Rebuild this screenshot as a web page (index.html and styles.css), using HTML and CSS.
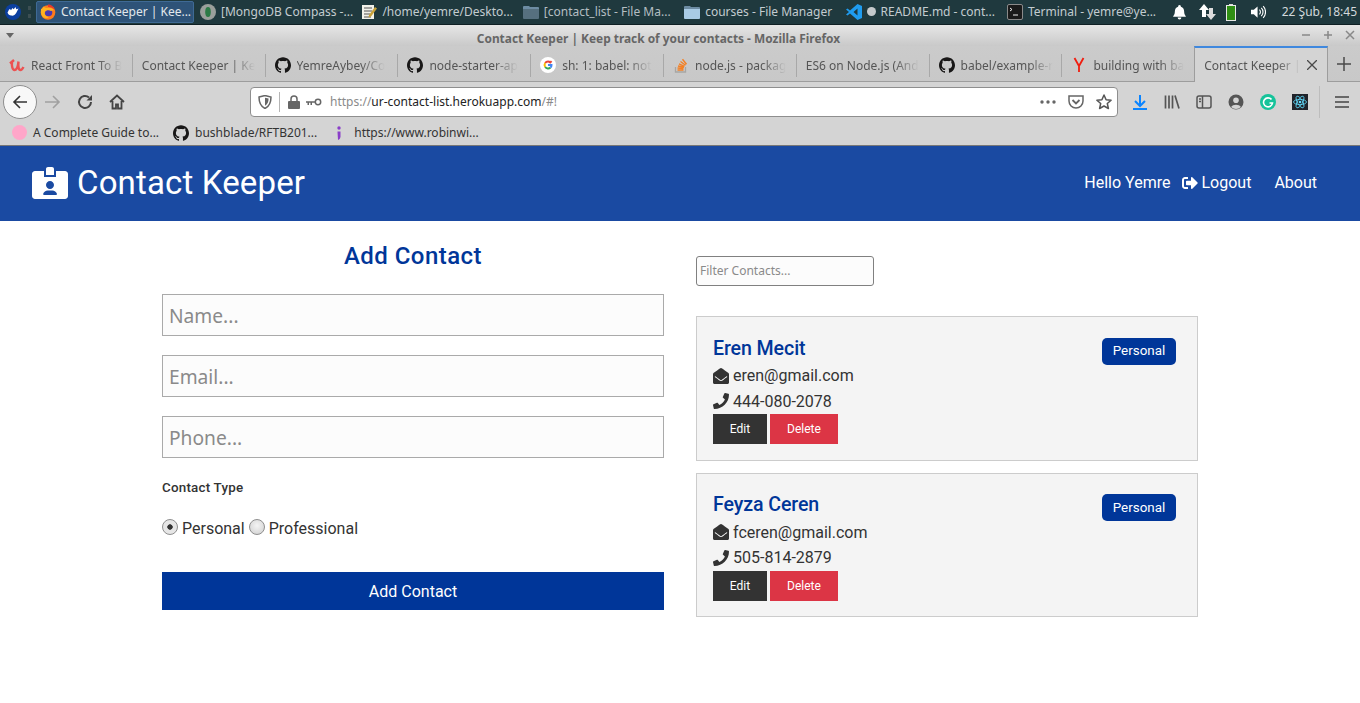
FILE: index.html
```html
<!DOCTYPE html>
<html lang="en">
<head>
<meta charset="utf-8">
<title>Contact Keeper</title>
<link rel="stylesheet" href="styles.css">
</head>
<body>
<svg class="sprite" aria-hidden="true">
  <symbol id="gh" viewBox="0 0 24 24"><path d="M12 .297c-6.63 0-12 5.373-12 12 0 5.303 3.438 9.8 8.205 11.385.6.113.82-.258.82-.577 0-.285-.01-1.04-.015-2.04-3.338.724-4.042-1.61-4.042-1.61C4.422 18.07 3.633 17.7 3.633 17.7c-1.087-.744.084-.729.084-.729 1.205.084 1.838 1.236 1.838 1.236 1.07 1.835 2.809 1.305 3.495.998.108-.776.417-1.305.76-1.605-2.665-.3-5.466-1.332-5.466-5.93 0-1.31.465-2.38 1.235-3.22-.135-.303-.54-1.523.105-3.176 0 0 1.005-.322 3.3 1.23.96-.267 1.98-.399 3-.405 1.02.006 2.04.138 3 .405 2.28-1.552 3.285-1.23 3.285-1.23.645 1.653.24 2.873.12 3.176.765.84 1.23 1.91 1.23 3.22 0 4.61-2.805 5.625-5.475 5.92.42.36.81 1.096.81 2.22 0 1.606-.015 2.896-.015 3.286 0 .315.21.69.825.57C20.565 22.092 24 17.592 24 12.297c0-6.627-5.373-12-12-12"/></symbol>
  <symbol id="mail" viewBox="0 0 512 512"><path d="M512 464c0 26.51-21.49 48-48 48H48c-26.51 0-48-21.49-48-48V200.724a48 48 0 0 1 18.387-37.776c24.913-19.529 45.501-35.365 164.2-121.511C199.412 29.17 232.797-.347 256 .003c23.198-.354 56.596 29.172 73.413 41.433 118.687 86.137 139.303 101.995 164.2 121.512A48 48 0 0 1 512 200.724V464zm-65.666-196.605c-2.563-3.728-7.7-4.595-11.339-1.907-22.845 16.873-55.462 40.705-105.582 77.079-16.825 12.266-50.21 41.781-73.413 41.43-23.211.344-56.559-29.143-73.413-41.43-50.114-36.37-82.734-60.204-105.582-77.079-3.639-2.688-8.776-1.821-11.339 1.907l-9.072 13.196a7.998 7.998 0 0 0 1.839 10.967c22.887 16.899 55.454 40.69 105.303 76.868 20.274 14.781 56.524 47.813 92.264 47.573 35.724.242 71.961-32.771 92.263-47.573 49.85-36.179 82.418-59.97 105.303-76.868a7.998 7.998 0 0 0 1.839-10.967l-9.071-13.196z"/></symbol>
  <symbol id="phone" viewBox="0 0 512 512"><path d="M493.4 24.6l-104-24c-11.3-2.6-22.9 3.3-27.5 13.9l-48 112c-4.2 9.8-1.4 21.3 6.9 28l60.6 49.6c-36 76.7-98.9 140.5-177.2 177.2l-49.6-60.6c-6.8-8.3-18.2-11.1-28-6.9l-112 48C3.9 366.5-2 378.1.6 389.4l24 104C27.1 504.2 36.7 512 48 512c256.1 0 464-207.5 464-464 0-11.2-7.7-20.9-18.6-23.4z"/></symbol>
  <symbol id="folder" viewBox="0 0 16 14"><path d="M0 2a1 1 0 0 1 1-1h5l1 1h8a1 1 0 0 1 1 1v1H0z" fill="#6d8ca3"/><path d="M0 4h16v9a1 1 0 0 1-1 1H1a1 1 0 0 1-1-1z" fill="currentColor"/></symbol>
</svg>

<div class="taskbar">
  <div class="start">
    <svg class="start-logo" viewBox="0 0 16 16"><circle cx="8" cy="8" r="8" fill="#0b3fa0"/><path d="M2.500 8.500C3.500 7.500 3.500 5 5 5l1 1.200L7.500 4l1.200 1.300L10.500 3l.8 2.200 2.200-.7-2.300 4.500c-1 2-3.200 3-5 2.500-1.700 0-3.200-1.200-3.700-3z" fill="#fff"/></svg>
    <span class="grip"></span>
  </div>
  <div class="task task-active">
    <svg class="ticon" viewBox="0 0 16 16"><circle cx="8" cy="8.500" r="7.300" fill="#ff7a1a"/><circle cx="8.500" cy="8.500" r="3.800" fill="#4a3ab0"/><path d="M1 5c1 0 2-1 3-3 0 1 1 2 3 2 3-.500 5 0 7 2l-3 1C9 5.500 6 6 5 8c-1 2 1 5 4 5-3 3-8 0-8-5z" fill="#ffb320"/><path d="M8 .600c3 0 6 2 7 5.400-2-2-4-3-7-3z" fill="#e8392c"/></svg>
    <span class="tlabel">Contact Keeper | Kee...</span>
  </div>
  <div class="task">
    <svg class="ticon" viewBox="0 0 16 16"><circle cx="8" cy="8" r="8" fill="#9a9f9b"/><ellipse cx="8" cy="8" rx="2.800" ry="5" fill="#2c7a46"/></svg>
    <span class="tlabel">[MongoDB Compass -...</span>
  </div>
  <div class="task">
    <svg class="ticon" viewBox="0 0 16 16"><path d="M1 1h12v14H1z" fill="#f2f2ea"/><path d="M3 4h8M3 7h8M3 10h6M3 13h7" stroke="#555" stroke-width="1"/><path d="M8 11l6-8 2 1.500-6 8-2.500 1z" fill="#c7a23a"/></svg>
    <span class="tlabel">/home/yemre/Deskto...</span>
  </div>
  <div class="task task-dim">
    <svg class="ticon folder-dim"><use href="#folder"/></svg>
    <span class="tlabel">[contact_list - File Ma...</span>
  </div>
  <div class="task">
    <svg class="ticon folder-light"><use href="#folder"/></svg>
    <span class="tlabel">courses - File Manager</span>
  </div>
  <div class="task">
    <svg class="ticon" viewBox="0 0 16 16"><path d="M11.500 0L16 2v12l-4.500 2L4 9.500 1.500 11.500 0 10.500 3 8 0 5.500l1.500-1L4 6.500zM11.500 4.500L7.500 8l4 3.500z" fill="#1f9cf0"/></svg>
    <span class="tlabel tlabel-code"><span class="dot-mod"></span>README.md - cont...</span>
  </div>
  <div class="task">
    <svg class="ticon" viewBox="0 0 16 16"><rect x=".5" y=".5" width="15" height="15" rx="1.500" fill="#1a1a1a" stroke="#8a8a8a"/><path d="M3 7l2-1.500L3 4M6 11h5" stroke="#eee" fill="none"/></svg>
    <span class="tlabel">Terminal - yemre@ye...</span>
  </div>
  <div class="tray">
    <svg class="tray-bell" viewBox="0 0 14 16"><path d="M7 0a1.500 1.500 0 0 1 1.500 1.700C11 2.500 12 4.500 12 7c0 3 1 4 2 5.500H0C1 11 2 10 2 7c0-2.500 1-4.500 3.500-5.300A1.500 1.500 0 0 1 7 0zM5 13.500h4a2 2 0 0 1-4 0z" fill="#fff"/></svg>
    <svg class="tray-net" viewBox="0 0 18 18"><path d="M5 1l5 6H7v7H3V7H0z" fill="#fff"/><path d="M12 17l-5-6h3V5h4v6h3z" fill="#ddd"/></svg>
    <svg class="tray-bat" viewBox="0 0 10 17"><rect x="3" y="0" width="4" height="2" fill="#ddd"/><rect x=".5" y="1.500" width="9" height="15" fill="#2f8f14" stroke="#e8e8e8"/></svg>
    <svg class="tray-vol" viewBox="0 0 16 14"><path d="M0 4.500h3L7 1v12L3 9.500H0z" fill="#fff"/><path d="M9 4.500a3.500 3.500 0 0 1 0 5M11 2.500a6.500 6.500 0 0 1 0 9M13 .8a9 9 0 0 1 0 12.400" stroke="#fff" stroke-width="1.200" fill="none"/></svg>
    <span class="clock tlabel">22 Şub, 18:45</span>
  </div>
</div>

<div class="window-title">
  <svg class="wmenu" viewBox="0 0 8 5"><path d="M0 0h8L4 5z" fill="#666"/></svg>
  <span class="wtitle">Contact Keeper | Keep track of your contacts - Mozilla Firefox</span>
  <div class="wbtns">
    <svg viewBox="0 0 10 10"><path d="M1 5h8" stroke="#888" stroke-width="1.500"/></svg>
    <svg viewBox="0 0 10 10"><path d="M1 5h8M5 1v8" stroke="#888" stroke-width="1.500"/></svg>
    <svg viewBox="0 0 10 10"><path d="M1 1l8 8M9 1l-8 8" stroke="#888" stroke-width="1.500"/></svg>
  </div>
</div>

<div class="tabbar">
  <div class="tab">
    <svg class="fav" viewBox="0 0 16 16"><path d="M1 6.500l4-3.500M3 5c-.500 4 .500 8 2.500 8S9 9 9.500 4.500C9 9 9.500 13 11.500 13c1 0 2-1 3-3" stroke="#ec5252" stroke-width="2.400" fill="none"/></svg>
    <span class="tab-text">React Front To B</span>
  </div>
  <div class="tab"><span class="tab-text">Contact Keeper | Ke</span></div>
  <div class="tab"><svg class="fav"><use href="#gh"/></svg><span class="tab-text">YemreAybey/Co</span></div>
  <div class="tab"><svg class="fav"><use href="#gh"/></svg><span class="tab-text">node-starter-ap</span></div>
  <div class="tab">
    <svg class="fav" viewBox="0 0 16 16"><circle cx="8" cy="8" r="8" fill="#fff"/><path d="M8 4.500a3.500 3.500 0 0 1 2.300.9l1.300-1.300" stroke="#ea4335" stroke-width="2" fill="none"/><path d="M5.200 6a3.500 3.500 0 0 1 2.800-1.500" stroke="#ea4335" stroke-width="2" fill="none"/><path d="M5.200 6a3.500 3.500 0 0 0 0 4" stroke="#fbbc05" stroke-width="2" fill="none"/><path d="M5.200 10a3.500 3.500 0 0 0 5.300.6" stroke="#34a853" stroke-width="2" fill="none"/><path d="M10.500 10.600A3.500 3.500 0 0 0 11.500 8H8" stroke="#4285f4" stroke-width="2" fill="none"/></svg>
    <span class="tab-text">sh: 1: babel: not</span>
  </div>
  <div class="tab">
    <svg class="fav" viewBox="0 0 16 16"><path d="M2.500 10v5h10v-5" stroke="#a8a6a3" stroke-width="1.300" fill="none"/><path d="M4.500 13h6M4.500 11l6 .5M5 9l6 1.200M6 6.800l5.500 2.600M7.500 4.500l5 3.800M9.500 2.300l4 5" stroke="#f48024" stroke-width="1.400" fill="none"/></svg>
    <span class="tab-text">node.js - packag</span>
  </div>
  <div class="tab"><span class="tab-text">ES6 on Node.js (And</span></div>
  <div class="tab"><svg class="fav"><use href="#gh"/></svg><span class="tab-text">babel/example-r</span></div>
  <div class="tab">
    <svg class="fav" viewBox="0 0 16 16"><path d="M3.500 1L8 9v6M12.500 1L8 9" stroke="#f01d0f" stroke-width="1.800" fill="none"/></svg>
    <span class="tab-text">building with ba</span>
  </div>
  <div class="tab tab-active">
    <span class="tab-text">Contact Keeper |</span>
    <svg class="tab-x" viewBox="0 0 10 10"><path d="M0 0l10 10M10 0L0 10" stroke="#4a4a4a" stroke-width="1.300"/></svg>
  </div>
  <svg class="tab-new" viewBox="0 0 14 14"><path d="M7 0v14M0 7h14" stroke="#4a4a4a" stroke-width="1.500"/></svg>
</div>

<div class="navbar">
  <div class="back"><svg viewBox="0 0 16 16"><path d="M15 8H2M8 2L2 8l6 6" stroke="#333" stroke-width="1.600" fill="none"/></svg></div>
  <svg class="nav-ic nav-fwd" viewBox="0 0 16 16"><path d="M0 8h14M8 2l6 6-6 6" stroke="#a0a0a0" stroke-width="1.600" fill="none"/></svg>
  <svg class="nav-ic nav-reload" viewBox="0 0 16 16"><path d="M14 8a6 6 0 1 1-2-4.500" stroke="#444" stroke-width="2" fill="none"/><path d="M15 1v5.500H9.500z" fill="#444"/></svg>
  <svg class="nav-ic nav-home" viewBox="0 0 16 16"><path d="M1 8l7-6.500L15 8M3.500 7v7.500h3.500v-4h2v4h3.500V7" stroke="#444" stroke-width="1.800" fill="none"/></svg>
  <div class="urlbar">
    <svg class="ub-shield" viewBox="0 0 14 14"><path d="M1 2l6-1.500L13 2c0 5-1 9-6 11.500C2 11 1 7 1 2z" stroke="#666" stroke-width="1.500" fill="none"/><path d="M7 2.800l3.500.8c0 3-.5 5.500-3.500 7.200z" fill="#666"/></svg>
    <span class="ub-sep"></span>
    <svg class="ub-lock" viewBox="0 0 12 14"><path d="M3 6V4a3 3 0 0 1 6 0v2" stroke="#666" stroke-width="1.500" fill="none"/><rect y="6" width="12" height="8" rx="1" fill="#666"/></svg>
    <svg class="ub-key" viewBox="0 0 16 8"><circle cx="12" cy="4" r="2.700" stroke="#666" stroke-width="1.500" fill="none"/><path d="M9 3.300H0v1.500h1.500V7H3V4.800h1.500V7H6V4.800h3z" fill="#666"/></svg>
    <span class="url"><span class="url-dim">https://</span>ur-contact-list.herokuapp.com<span class="url-dim">/#!</span></span>
    <svg class="ub-dots" viewBox="0 0 16 4"><circle cx="2" cy="2" r="1.700"/><circle cx="8" cy="2" r="1.700"/><circle cx="14" cy="2" r="1.700"/></svg>
    <svg class="ub-pocket" viewBox="0 0 16 14"><path d="M1 1h14v5a7 7 0 0 1-14 0z" stroke="#666" stroke-width="1.500" fill="none"/><path d="M4.500 5L8 8.500 11.500 5" stroke="#666" stroke-width="1.800" fill="none"/></svg>
    <svg class="ub-star" viewBox="0 0 16 16"><path d="M8 1l2.100 4.700 5 .5-3.800 3.300 1.100 5L8 12l-4.400 2.500 1.100-5L.9 6.200l5-.5z" stroke="#555" stroke-width="1.500" fill="none" stroke-linejoin="round"/></svg>
  </div>
  <svg class="tool tool-dl" viewBox="0 0 16 16"><path d="M8 1v10M3 7l5 5 5-5" stroke="#0a84ff" stroke-width="2" fill="none"/><path d="M1 15h14" stroke="#0a84ff" stroke-width="2"/></svg>
  <svg class="tool" viewBox="0 0 16 16"><path d="M1.500 1.500v13M5 1.500v13M8.500 1.500v13M11 1.500l4 13" stroke="#555" stroke-width="1.700" fill="none"/></svg>
  <svg class="tool" viewBox="0 0 16 16"><rect x="1" y="2" width="14" height="12" rx="2" stroke="#555" stroke-width="1.500" fill="none"/><path d="M6.500 2v12M3 5h2M3 7.500h2" stroke="#555" stroke-width="1.500"/></svg>
  <svg class="tool" viewBox="0 0 16 16"><circle cx="8" cy="8" r="7.500" fill="#555"/><circle cx="8" cy="6.300" r="2.800" fill="#d4d4d4"/><path d="M3 13a5.500 4 0 0 1 10 0 7 7 0 0 1-10 0z" fill="#d4d4d4"/></svg>
  <svg class="tool" viewBox="0 0 16 16"><circle cx="8" cy="8" r="8" fill="#15c39a"/><path d="M11.500 5.500A4.500 4.500 0 1 0 12.500 9H9.500" stroke="#fff" stroke-width="1.600" fill="none"/></svg>
  <svg class="tool" viewBox="0 0 16 16"><rect width="16" height="16" fill="#20232a"/><g stroke="#61dafb" stroke-width=".8" fill="none"><ellipse cx="8" cy="8" rx="6.500" ry="2.600"/><ellipse cx="8" cy="8" rx="6.500" ry="2.600" transform="rotate(60 8 8)"/><ellipse cx="8" cy="8" rx="6.500" ry="2.600" transform="rotate(120 8 8)"/></g><circle cx="8" cy="8" r="1.300" fill="#61dafb"/></svg>
  <span class="tool-sep"></span>
  <svg class="tool-menu" viewBox="0 0 14 12"><path d="M0 1h14M0 6h14M0 11h14" stroke="#444" stroke-width="1.700"/></svg>
</div>

<div class="bookmarks">
  <div class="bm"><span class="bm-dot"></span>A Complete Guide to...</div>
  <div class="bm"><svg class="fav"><use href="#gh"/></svg>bushblade/RFTB201...</div>
  <div class="bm"><svg class="bm-semi" viewBox="0 0 6 14"><circle cx="3" cy="2" r="1.700" fill="#8a3ec9"/><path d="M1.500 5.500h3v5c0 1.500-1 3-2.500 3.500z" fill="#8a3ec9"/></svg>https://www.robinwi...</div>
</div>

<header class="app-nav">
  <h1 class="brand">
    <svg class="brand-icon" viewBox="0 0 576 512"><path d="M528 64H384v96H192V64H48C21.500 64 0 85.500 0 112v352c0 26.500 21.500 48 48 48h480c26.500 0 48-21.500 48-48V112c0-26.500-21.500-48-48-48zM288 224c35.300 0 64 28.700 64 64s-28.700 64-64 64-64-28.700-64-64 28.700-64 64-64zm93.300 224H194.700c-10.400 0-18.800-10-15.600-19.800 10-30.600 39-52.200 72.900-52.200h74c33.900 0 62.900 21.600 72.900 52.200 3.200 9.800-5.200 19.800-15.600 19.800zM352 32c0-17.700-14.300-32-32-32h-64c-17.700 0-32 14.300-32 32v96h128V32z"/></svg>
    Contact Keeper
  </h1>
  <nav class="app-links">
    <span>Hello Yemre</span>
    <a class="logout" href="#"><svg class="logout-ic" viewBox="0 0 512 512"><path d="M497 273L329 441c-15 15-41 4.500-41-17v-96H152c-13.300 0-24-10.700-24-24v-96c0-13.300 10.700-24 24-24h136V88c0-21.400 25.900-32 41-17l168 168c9.300 9.400 9.300 24.600 0 34zM192 436v-40c0-6.600-5.400-12-12-12H96c-17.700 0-32-14.300-32-32V160c0-17.700 14.300-32 32-32h84c6.600 0 12-5.400 12-12V76c0-6.600-5.400-12-12-12H96c-53 0-96 43-96 96v192c0 53 43 96 96 96h84c6.600 0 12-5.400 12-12z"/></svg>Logout</a>
    <a class="about" href="#">About</a>
  </nav>
</header>

<main class="container">
  <form class="contact-form">
    <h2 class="form-title">Add Contact</h2>
    <input class="field" type="text" placeholder="Name...">
    <input class="field" type="text" placeholder="Email...">
    <input class="field" type="text" placeholder="Phone...">
    <h5 class="type-label">Contact Type</h5>
    <div class="radios">
      <span class="radio radio-on"></span><span class="radio-text">Personal</span>
      <span class="radio"></span><span class="radio-text">Professional</span>
    </div>
    <button class="submit" type="button">Add Contact</button>
  </form>
  <section class="contacts">
    <input class="filter" type="text" placeholder="Filter Contacts...">
    <article class="card">
      <div class="card-head">
        <h3 class="card-name">Eren Mecit</h3>
        <span class="badge">Personal</span>
      </div>
      <p class="card-line"><svg class="line-ic"><use href="#mail"/></svg>eren@gmail.com</p>
      <p class="card-line"><svg class="line-ic"><use href="#phone"/></svg>444-080-2078</p>
      <div class="card-btns"><button class="btn btn-dark" type="button">Edit</button><button class="btn btn-red" type="button">Delete</button></div>
    </article>
    <article class="card">
      <div class="card-head">
        <h3 class="card-name">Feyza Ceren</h3>
        <span class="badge">Personal</span>
      </div>
      <p class="card-line"><svg class="line-ic"><use href="#mail"/></svg>fceren@gmail.com</p>
      <p class="card-line"><svg class="line-ic"><use href="#phone"/></svg>505-814-2879</p>
      <div class="card-btns"><button class="btn btn-dark" type="button">Edit</button><button class="btn btn-red" type="button">Delete</button></div>
    </article>
  </section>
</main>
</body>
</html>
```

FILE: styles.css
```css
* { box-sizing: border-box; }
html, body { margin: 0; height: 100%; overflow: hidden; }
body { background: #fff; font-family: "Roboto", sans-serif; color: #333; }
.sprite { display: none; }

/* desktop panel */
.taskbar { height: 25px; background: #1f393e; display: flex; align-items: center; font: 12px/25px "Noto Sans", sans-serif; color: #c3ccd0; border-bottom: 1px solid #0f2024; }
.start { width: 36px; flex: none; display: flex; align-items: center; padding-left: 5px; }
.start-logo { width: 16px; height: 16px; }
.grip { width: 4px; height: 12px; margin-left: 7px; border-left: 3px dotted #3c4f53; }
.task { width: 161.4px; flex: none; height: 25px; display: flex; align-items: center; padding-left: 3px; gap: 5px; white-space: nowrap; overflow: hidden; }
.tlabel { position: relative; top: -1px; }
.task-active { width: 158px; height: 22px; padding-left: 3px; margin-right: 3px; background: #2e5378; border: 1px solid #3f6a95; border-radius: 2px; color: #e3e8ec; }
.task-dim { color: #b4bec2; }
.ticon { width: 16px; height: 16px; flex: none; }
.folder-dim { color: #56707f; }
.folder-light { color: #a9cbe4; }
.dot-mod { display: inline-block; width: 9px; height: 9px; border-radius: 50%; background: #c4c9cc; margin-right: 5px; }
.tray { flex: 1; display: flex; align-items: center; justify-content: flex-end; padding-right: 3px; color: #d3d9dc; }
.tray-bell { width: 13px; height: 15px; margin-right: 13px; }
.tray-net { width: 18px; height: 18px; margin-right: 9px; }
.tray-bat { width: 10px; height: 17px; margin-right: 15px; }
.tray-vol { width: 15px; height: 14px; margin-right: 16px; }

/* window title */
.window-title { height: 21px; padding: 4px 43px 0 0; background: linear-gradient(#e6e6e6, #c9c9c9); display: flex; align-items: center; justify-content: center; position: relative; font: bold 11.9px "Noto Sans", sans-serif; color: #666; }
.wmenu { position: absolute; left: 6px; top: 8px; width: 8px; height: 5px; }
.wbtns { position: absolute; right: 5px; top: 5px; display: flex; gap: 12px; }
.wbtns svg { width: 10px; height: 10px; }

/* tabs */
.tabbar { height: 36px; background: linear-gradient(#cbcbcb, #c8c8c8); border-bottom: 1px solid #9d9d9d; display: flex; align-items: stretch; font: 12px "Noto Sans", sans-serif; color: #555; }
.tab { width: 132.8px; flex: none; height: 35px; display: flex; align-items: center; padding: 3px 5px 0 9px; gap: 6px; position: relative; white-space: nowrap; }
.tab::after { content: ""; position: absolute; right: 0; top: 8px; bottom: 4px; width: 1px; background: #a8a8a8; }
.tab-text { flex: none; -webkit-mask-image: linear-gradient(90deg, #000 calc(100% - 24px), transparent); mask-image: linear-gradient(90deg, #000 calc(100% - 24px), transparent); }
.fav { width: 16px; height: 16px; flex: none; fill: #181717; }
.tab-active { background: #d4d4d4; width: 134px; height: 36px; margin: 0 0 -1px -1px; padding-right: 9px; border-top: 2px solid #3f88de; border-left: 1px solid #9d9d9d; border-right: 1px solid #9d9d9d; padding-top: 0; }
.tab-active::after { display: none; }
.tab-x { width: 10px; height: 10px; flex: none; margin: 0 5px 0 auto; }
.tab-new { width: 14px; height: 14px; margin: 11px 0 0 9px; flex: none; }

/* toolbar */
.navbar { height: 39px; background: #d4d4d4; display: flex; align-items: center; padding-left: 3px; }
.back { width: 34px; height: 34px; border-radius: 50%; background: #f8f8f8; border: 1px solid #8e8e8e; display: flex; align-items: center; justify-content: center; flex: none; }
.back svg { width: 16px; height: 16px; }
.nav-ic { width: 16px; height: 16px; flex: none; }
.nav-fwd { margin-left: 8px; }
.nav-reload { margin-left: 16px; }
.nav-home { margin-left: 16px; }
.urlbar { width: 868px; height: 30px; margin-left: 125px; margin-right: 14px; background: #fff; border: 1px solid #8e8e8e; border-radius: 4px; display: flex; align-items: center; padding-left: 7px; flex: none; font: 12px "Noto Sans", sans-serif; color: #222; }
.ub-shield { width: 14px; height: 14px; }
.ub-sep { width: 1px; height: 20px; background: #b5b5b5; margin: 0 8px 0 7px; }
.ub-lock { width: 12px; height: 14px; }
.ub-key { width: 16px; height: 8px; margin-left: 6px; }
.url { margin-left: 8px; flex: 1; }
.url-dim { color: #8a8a8a; }
.ub-dots { width: 16px; height: 4px; fill: #666; }
.ub-pocket { width: 16px; height: 14px; margin-left: 12px; }
.ub-star { width: 16px; height: 16px; margin: 0 5px 0 12px; }
.tool { width: 16px; height: 16px; flex: none; margin-right: 16px; }
.tool-sep { width: 1px; height: 32px; background: #bdbdbd; margin-left: -5px; flex: none; }
.tool-menu { width: 14px; height: 12px; margin-left: 15px; flex: none; }

/* bookmarks */
.bookmarks { height: 25px; padding: 0 0 1px 12px; background: #d4d4d4; border-bottom: 1px solid #777; display: flex; align-items: center; font: 12px "Noto Sans", sans-serif; color: #333; }
.bm { display: flex; align-items: center; gap: 7px; margin-right: 14px; white-space: nowrap; }
.bm-dot { width: 15px; height: 15px; border-radius: 50%; background: #ffa6c9; margin-right: -1px; }
.bm-semi { width: 6px; height: 14px; margin: 0 5px 0 5px; }
.bm:nth-child(2) { gap: 6px; }

/* app navbar */
.app-nav { height: 75px; background: #1a4aa2; color: #fff; display: flex; align-items: center; justify-content: space-between; padding: 0 43px 2px 32px; }
.brand { margin: 0; font-size: 33px; font-weight: 400; letter-spacing: .15px; line-height: 1; display: flex; align-items: center; gap: 9px; }
.brand-icon { width: 36px; height: 32px; fill: #fff; }
.app-links { display: flex; align-items: center; font-size: 16px; }
.app-links a { color: #fff; text-decoration: none; }
.logout { display: flex; align-items: center; margin-left: 12px; }
.logout-ic { width: 16px; height: 16px; fill: #fff; margin-right: 3px; }
.about { margin-left: 23px; }

/* page */
.container { width: 1036px; margin: 0 auto; display: grid; grid-template-columns: 1fr 1fr; gap: 32px; }
.contact-form { display: flex; flex-direction: column; }
.form-title { margin: 20px 0 23px; font-size: 24px; font-weight: 500; letter-spacing: .45px; line-height: 30px; text-align: center; color: #003699; }
.field { display: block; width: 100%; height: 42px; margin-bottom: 19px; padding: 0 6px; background: #fcfcfc; border: 1px solid #aaa; border-radius: 0; font: 19.2px "Noto Sans", sans-serif; color: #333; }
.field::placeholder { color: #8a8a8a; opacity: 1; }
.type-label { margin: 1px 0 0; font-size: 13.4px; font-weight: 500; letter-spacing: .2px; line-height: 20px; color: #333; }
.radios { display: flex; align-items: center; margin-top: 19px; height: 22px; font-size: 16px; }
.radio { width: 16px; height: 16px; border-radius: 50%; border: 1px solid #8e8e8e; background: radial-gradient(circle at 50% 40%, #f4f4f4, #cfcfcf); flex: none; margin-top: -3px; }
.radio-on { background: radial-gradient(circle, #333 0 2.4px, #e6e6e6 3px); }
.radio-text { margin: 0 4px; }
.submit { display: block; width: 100%; height: 38px; margin-top: 33px; background: #003699; color: #fff; border: 0; font: 16px "Roboto", sans-serif; }
.contacts { display: flex; flex-direction: column; }
.filter { width: 178px; height: 30px; margin: 35px 0 30.2px; padding: 0 3px 2px; background: #fcfcfc; border: 1px solid #808080; border-radius: 3px; font: 12px "Noto Sans", sans-serif; }
.filter::placeholder { color: #8a8a8a; opacity: 1; }
.card { height: 144.8px; margin-bottom: 11.7px; padding: 15.5px 21px 0 16px; background: #f4f4f4; border: 1px solid #ccc; }
.card-head { display: flex; justify-content: space-between; align-items: flex-start; height: 30.5px; }
.card-name { margin: 4px 0 0; font-size: 19.6px; font-weight: 500; letter-spacing: -.1px; line-height: 24px; color: #003699; }
.badge { width: 74px; height: 27px; margin-top: 5px; padding-top: .6px; background: #003699; color: #fff; border-radius: 5px; font-size: 13.4px; line-height: 25px; text-align: center; }
.card-line { margin: 0; height: 25.5px; display: flex; align-items: center; font-size: 16px; color: #333; }
.line-ic { width: 16px; height: 16px; fill: #333; margin-right: 4px; flex: none; }
.card-btns { display: flex; gap: 3px; }
.btn { height: 30px; border: 0; padding: 0; font: 12px "Roboto", sans-serif; color: #fff; }
.btn-dark { width: 54px; background: #333; }
.btn-red { width: 68px; background: #dc3545; }
```
